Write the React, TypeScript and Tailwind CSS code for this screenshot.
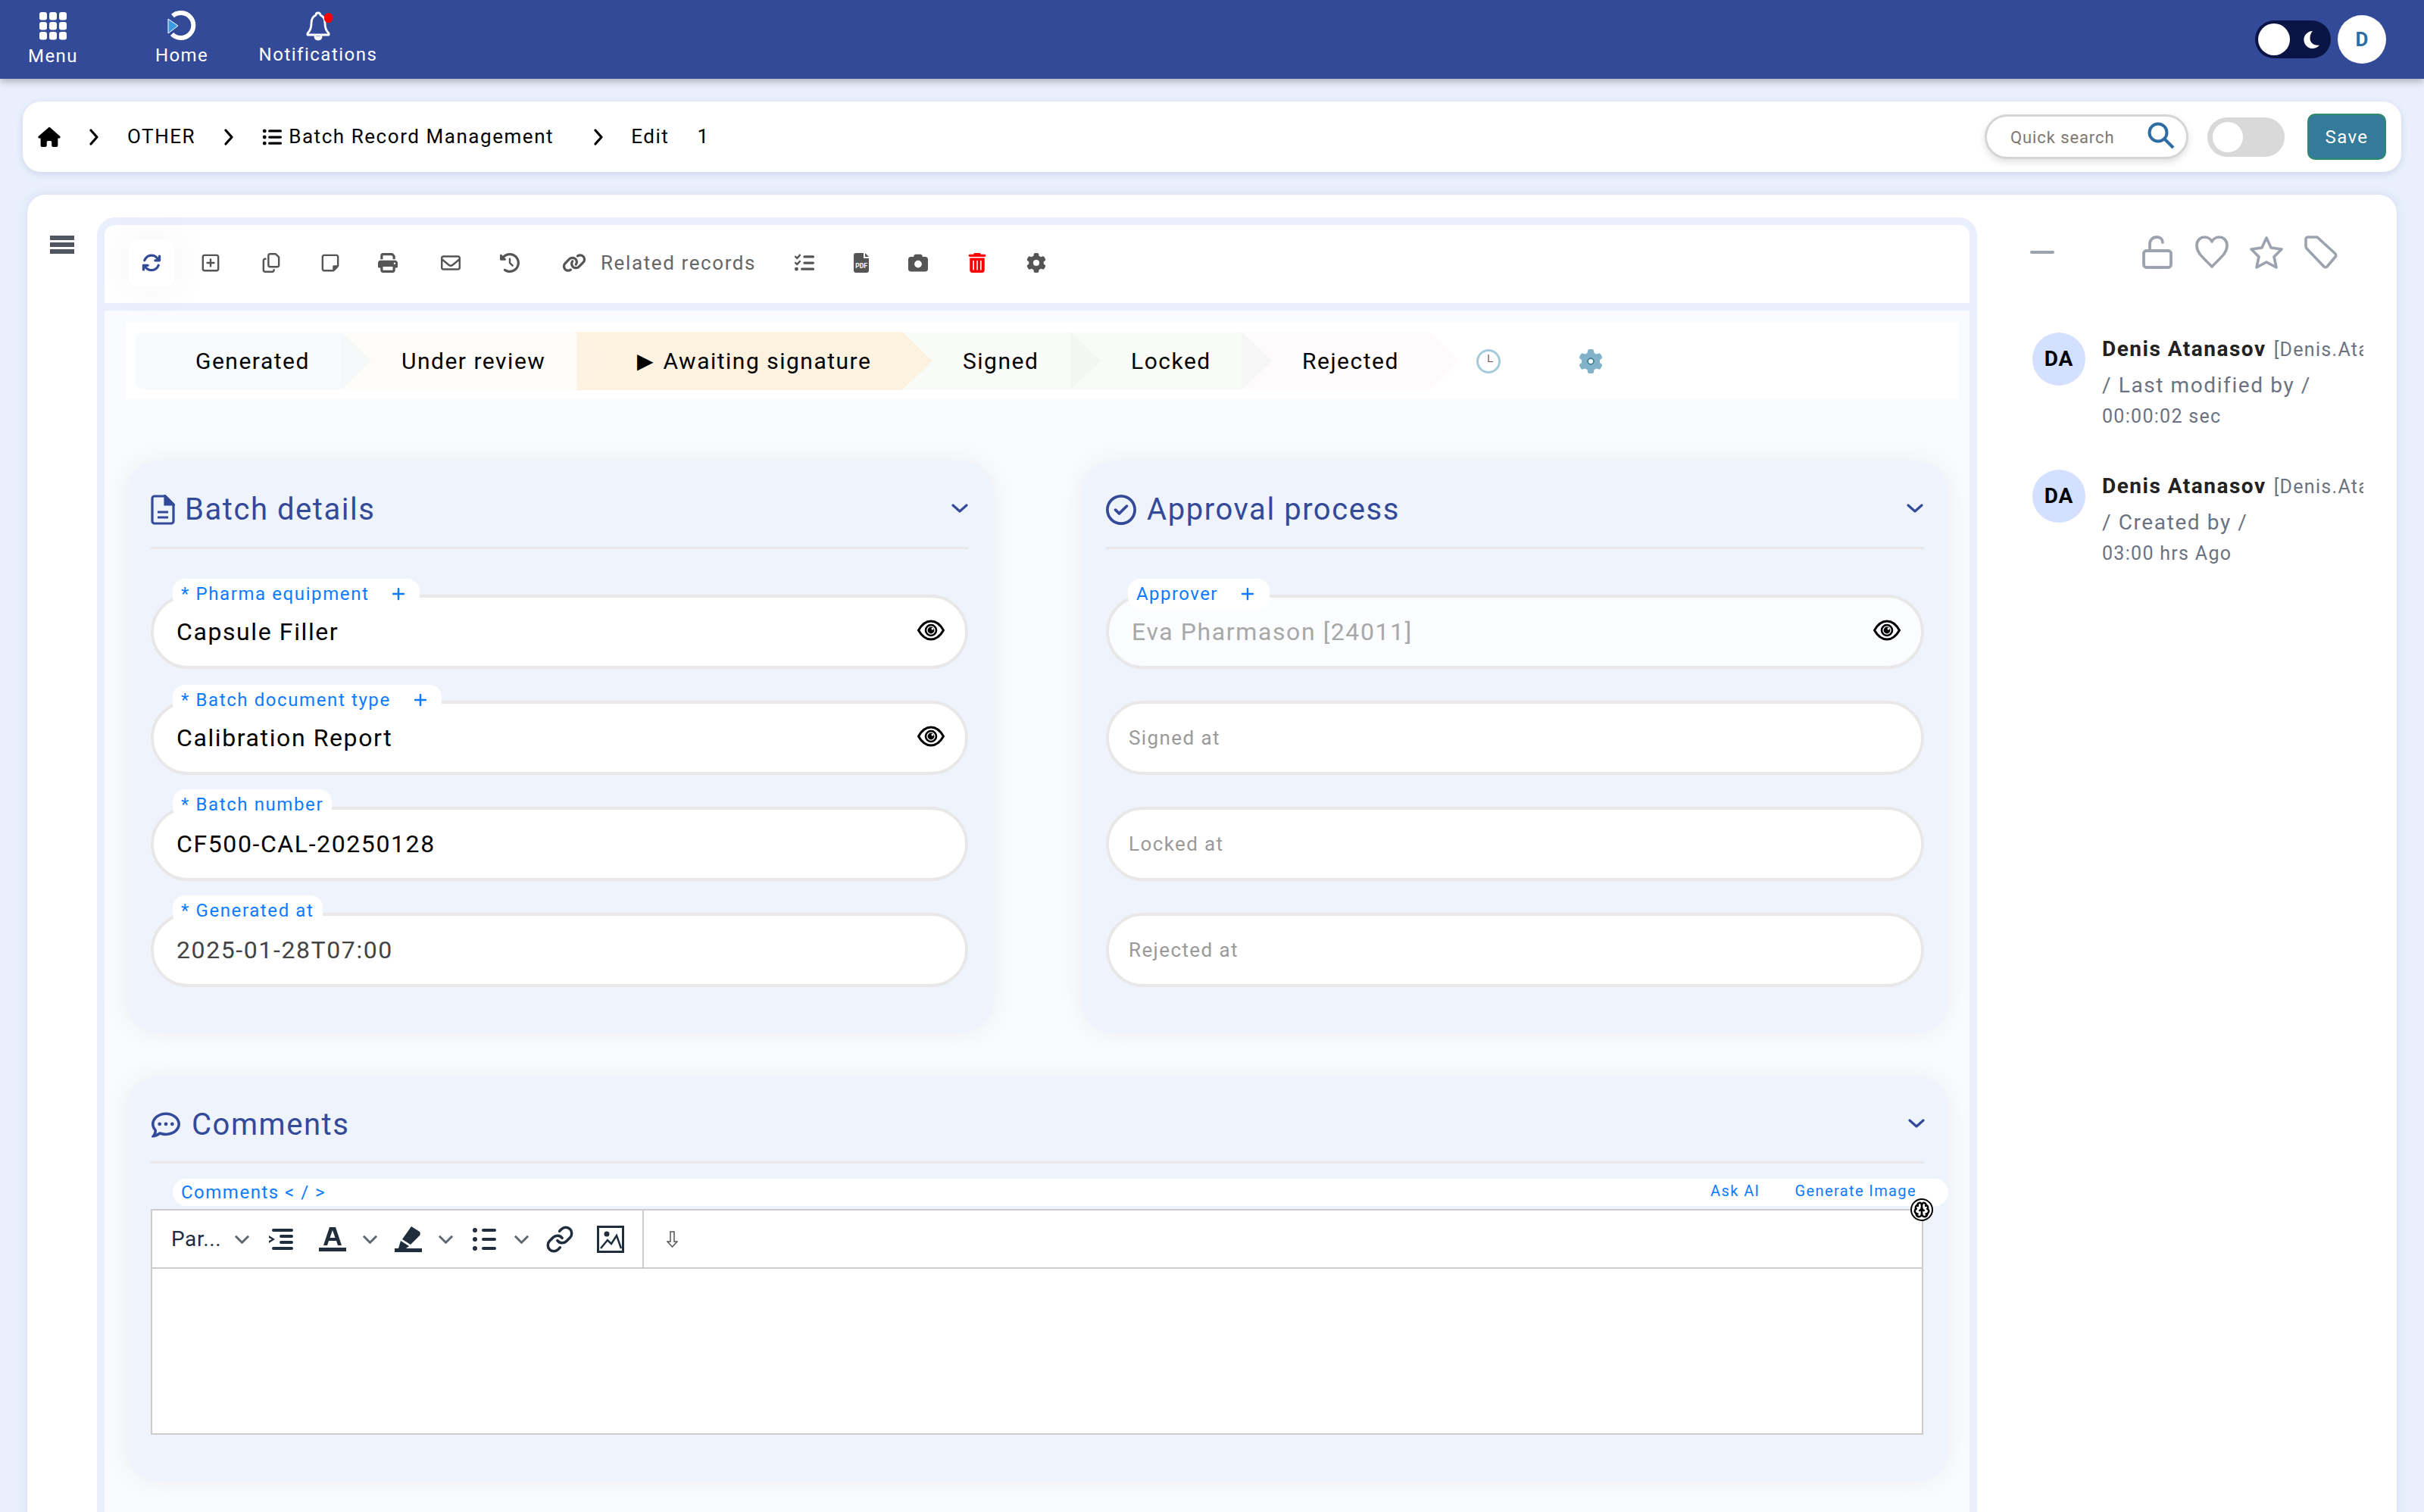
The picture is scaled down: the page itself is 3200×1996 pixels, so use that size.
import React from "react";
import {
  FaArrowsRotate, FaRegSquarePlus, FaRegCopy, FaRegNoteSticky, FaPrint, FaRegEnvelope,
  FaClockRotateLeft, FaLink, FaListCheck, FaCamera, FaTrashCan, FaGear, FaHouse, FaListUl,
  FaPlus, FaRegCircleCheck, FaRegCommentDots,
} from "react-icons/fa6";
import { Brain, Link as LinkIcon } from "lucide-react";

const Chev = ({ className }: { className: string }) => (
  <svg viewBox="0 0 12 22" className={className} fill="none" stroke="currentColor" strokeWidth="3.200" strokeLinecap="round" strokeLinejoin="round">
    <path d="M2 2l8 9-8 9" />
  </svg>
);

const Down = ({ className = "w-[24px] h-[14px] text-[#1f2d3d]" }: { className?: string }) => (
  <svg viewBox="0 0 24 14" className={className} fill="none" stroke="currentColor" strokeWidth="3.400">
    <path d="M2 2l10 10L22 2" />
  </svg>
);

const Eye = () => (
  <svg viewBox="0 0 36 28" className="absolute right-[27px] top-[29px] w-[36px] h-[28px]">
    <path d="M1.500 14C6 6 11.500 2 18 2s12 4 16.500 12C30 22 24.500 26 18 26S6 22 1.500 14Z" fill="none" stroke="#000" strokeWidth="3" strokeLinejoin="round" />
    <circle cx="18" cy="14" r="7" fill="none" stroke="#000" strokeWidth="2.600" />
    <circle cx="18" cy="14" r="4.400" fill="#000" />
    <circle cx="20" cy="12" r="1.500" fill="#fff" />
  </svg>
);

const Field = ({ label, value, plus, eye, chip, valueColor = "text-black" }: { label: string; value: string; plus?: boolean; eye?: boolean; chip: string; valueColor?: string }) => (
  <div className="relative h-[98px] rounded-full border-4 border-[#e8e8e8] bg-white flex items-center pl-[30px]">
    <div className={`absolute left-[25px] h-[40px] rounded-[16px] bg-white flex items-center pl-[11px] text-[24px] leading-none tracking-[1.6px] text-[#0d7bff] whitespace-nowrap ${chip}`}>
      {label}
      {plus && <FaPlus className="ml-[30px] w-[18px] h-[20px]" />}
    </div>
    <span className={`text-[32px] tracking-[1.6px] ${valueColor}`}>{value}</span>
    {eye && <Eye />}
  </div>
);

const EmptyField = ({ text }: { text: string }) => (
  <div className="h-[98px] rounded-full border-4 border-[#e8e8e8] bg-white flex items-center pl-[26px]">
    <span className="text-[26px] tracking-[1.4px] text-[#9a9a9a]">{text}</span>
  </div>
);

const CardChevron = () => <Chev className="w-[14px] h-[22px] rotate-90 text-[#334a99]" />;

const Step = ({ label, bg, arrow, className, first }: { label: React.ReactNode; bg: string; arrow: string; className: string; first?: boolean }) => (
  <div className={`relative h-[77px] flex items-center pl-[80px] text-[30px] tracking-[1.5px] text-black whitespace-nowrap ${bg} ${className} ${first ? "rounded-l-[14px]" : ""}`}>
    {label}
    <div className={`absolute z-10 left-full top-0 h-[77px] w-[40px] [clip-path:polygon(0_0,100%_50%,0_100%)] ${arrow}`} />
  </div>
);

const Activity = ({ action, time, className }: { action: string; time: string; className: string }) => (
  <div className={`flex ${className}`}>
    <div className="w-[70px] h-[70px] rounded-full bg-[#d3e0ff] flex items-center justify-center text-[28px] font-bold tracking-[0.8px] text-black shrink-0">DA</div>
    <div className="ml-[22px] w-[345px] overflow-hidden pt-[2px]">
      <div className="whitespace-nowrap leading-[40px] h-[40px]">
        <span className="text-[28px] font-bold tracking-[1.5px] text-[#222]">Denis Atanasov</span>
        <span className="ml-[10px] text-[25px] tracking-[1.3px] text-[#6b7280]">[Denis.Atanasov]</span>
      </div>
      <div className="mt-[10px] text-[28px] leading-[36px] tracking-[1.6px] text-[#6b7280]">{action}</div>
      <div className="mt-[7px] text-[25px] leading-[32px] tracking-[1.3px] text-[#6b7280]">{time}</div>
    </div>
  </div>
);

export default function App() {
  const icon = "w-[26px] h-[26px] text-[#555]";
  const cell = "w-[60px] h-[63px] flex items-center justify-center shrink-0";
  return (
    <div className="w-[3200px] h-[1996px] overflow-hidden bg-[#e9effc] [font-family:Roboto,sans-serif]">
      {/* Header */}
      <header className="relative z-20 h-[104px] bg-[#334a99] shadow-[0_3px_10px_rgba(0,0,0,0.3)] flex items-start text-white">
        <div className="w-[140px] flex flex-col items-center pt-[16px]">
          <svg viewBox="0 0 36 37" className="w-[36px] h-[37px]" fill="#fff">
            {[0, 13, 26].map((y) => [0, 13, 26].map((x) => <rect key={`${x}-${y}`} x={x} y={y} width="10" height="10.5" rx="3" />))}
          </svg>
          <span className="mt-[7px] text-[24px] leading-[28px] tracking-[1.4px]">Menu</span>
        </div>
        <div className="w-[200px] flex flex-col items-center pt-[14px]">
          <svg viewBox="0 0 40 40" className="w-[40px] h-[40px]">
            <path d="M8 7A16.500 16.500 0 1 1 7 31" fill="none" stroke="#fff" strokeWidth="6" />
            <path d="M2 11l13 9-13 10Z" fill="#3b9ae1" stroke="#fff" strokeWidth="1" />
          </svg>
          <span className="mt-[5px] text-[24px] leading-[28px] tracking-[1.4px]">Home</span>
        </div>
        <div className="w-[160px] flex flex-col items-center pt-[15px]">
          <div className="relative w-[34px] h-[39px]">
            <svg viewBox="0 0 34 39" className="w-[34px] h-[39px]" fill="none" stroke="#fff" strokeWidth="2.800" strokeLinejoin="round" strokeLinecap="round">
              <path d="M17 2c-2 0-3 1.500-3 3C9 7 8 11 8 16c0 6-2 10-5 13v2h28v-2c-3-3-5-7-5-13 0-5-1-9-6-11 0-1.500-1-3-3-3Z" />
              <path d="M13 33c0 3 2 4 4 4s4-1 4-4" fill="#fff" />
            </svg>
            <div className="absolute top-[2px] right-[-2px] w-[11px] h-[13px] rounded-full bg-[#ff0000]" />
          </div>
          <span className="mt-[4px] text-[24px] leading-[28px] tracking-[1.5px]">Notifications</span>
        </div>
        <div className="ml-auto mt-[27px] w-[100px] h-[50px] rounded-full bg-[#0a1545] flex items-center pl-[4px] relative">
          <div className="w-[42px] h-[42px] rounded-full bg-white" />
          <svg viewBox="0 0 24 24" className="ml-[16px] w-[24px] h-[24px]" fill="#fff">
            <path d="M14 1a11.500 11.500 0 1 0 9 18.500c-7 1.500-12.500-3-12.500-9C10.500 6.500 12 3 14 1Z" />
          </svg>
        </div>
        <div className="ml-[9px] mr-[50px] mt-[20px] w-[64px] h-[64px] rounded-full bg-white flex items-center justify-center text-[26px] font-bold text-[#2e6da4]">D</div>
      </header>

      {/* Breadcrumb */}
      <div className="ml-[30px] mt-[30px] w-[3140px] h-[93px] rounded-[24px] bg-white shadow-[0_3px_10px_rgba(60,80,150,0.15)] flex items-center text-[26px] tracking-[1.55px] text-black">
        <FaHouse className="ml-[20px] w-[30px] h-[26px]" />
        <Chev className="ml-[38px] w-[12px] h-[22px]" />
        <span className="ml-[38px]">OTHER</span>
        <Chev className="ml-[38px] w-[12px] h-[22px]" />
        <FaListUl className="ml-[38px] w-[26px] h-[26px]" />
        <span className="ml-[9px]">Batch Record Management</span>
        <Chev className="ml-[53px] w-[12px] h-[22px]" />
        <span className="ml-[37px]">Edit</span>
        <span className="ml-[37px]">1</span>
        <div className="ml-auto relative w-[269px] h-[59px] rounded-full border-[3px] border-[#d5d5d5] bg-white shadow-[0_4px_10px_rgba(0,0,0,0.12)] flex items-center pl-[31px] text-[22px] text-[#80776f] tracking-[0.9px]">
          <span className="mt-[2px]">Quick search</span>
          <svg viewBox="0 0 36 36" className="absolute right-[15px] top-[7px] w-[36px] h-[36px]" fill="none" stroke="#2e6da4">
            <circle cx="14" cy="14" r="11.500" strokeWidth="4" />
            <path d="M22 22l12 12" strokeWidth="4" />
          </svg>
        </div>
        <div className="ml-[25px] w-[102px] h-[52px] rounded-full bg-[#d9d9d9] flex items-center pl-[7px]">
          <div className="w-[40px] h-[40px] rounded-full bg-white" />
        </div>
        <div className="ml-[30px] mr-[20px] w-[104px] h-[61px] rounded-[10px] bg-[#347a99] border-2 border-[#2e8b67] flex items-center justify-center text-[24px] tracking-[1.4px] text-white">Save</div>
      </div>

      {/* Main */}
      <div className="ml-[36px] mt-[30px] w-[3128px] h-[1780px] rounded-t-[24px] bg-white shadow-[0_0_14px_rgba(60,80,150,0.12)] flex items-start">
        <div className="w-[92px] pt-[54px] pl-[30px]">
          <div className="w-[32px] flex flex-col gap-[3px]">
            <div className="h-[6px] bg-[#50565f]" />
            <div className="h-[6px] bg-[#50565f]" />
            <div className="h-[6px] bg-[#50565f]" />
          </div>
        </div>

        {/* Form frame */}
        <div className="mt-[30px] w-[2482px] h-[1780px] rounded-t-[24px] border-[10px] border-[#e9effc] bg-[#fafbff]">
          <div className="h-[103px] pb-[3px] rounded-t-[14px] bg-white flex items-center pl-[32px]">
            <div className={`${cell} bg-white rounded-[12px] shadow-[0_0_60px_rgba(0,0,0,0.06)]`}>
              <FaArrowsRotate className="w-[26px] h-[26px] text-[#334a99]" />
            </div>
            <div className={`${cell} ml-[18px]`}><FaRegSquarePlus className={icon} /></div>
            <div className={`${cell} ml-[20px]`}><FaRegCopy className={icon} /></div>
            <div className={`${cell} ml-[18px]`}><FaRegNoteSticky className={icon} /></div>
            <div className={`${cell} ml-[16px]`}><FaPrint className={icon} /></div>
            <div className={`${cell} ml-[23px]`}><FaRegEnvelope className={icon} /></div>
            <div className={`${cell} ml-[18px]`}><FaClockRotateLeft className={icon} /></div>
            <FaLink className="ml-[39px] w-[32px] h-[26px] text-[#555]" />
            <span className="ml-[19px] w-[206px] text-[26px] tracking-[1.6px] text-[#666] whitespace-nowrap">Related records</span>
            <div className={`${cell} ml-[33px]`}><FaListCheck className={icon} /></div>
            <div className={`${cell} ml-[15px]`}>
              <svg viewBox="0 0 20 26" className="w-[20px] h-[26px]">
                <path d="M3 0h10v7h7v16a3 3 0 0 1-3 3H3a3 3 0 0 1-3-3V3a3 3 0 0 1 3-3Z" fill="#555" />
                <path d="M15 0l5 5h-5Z" fill="#555" />
                <text x="10" y="20" textAnchor="middle" fontSize="8.500" fontWeight="700" fill="#fff" fontFamily="Roboto, sans-serif">PDF</text>
              </svg>
            </div>
            <div className={`${cell} ml-[15px]`}><FaCamera className={icon} /></div>
            <div className={`${cell} ml-[18px]`}><FaTrashCan className="w-[26px] h-[26px] text-[#ff0000]" /></div>
            <div className={`${cell} ml-[18px]`}><FaGear className={icon} /></div>
          </div>
          <div className="h-[10px] bg-[#e9effc]" />

          {/* Status bar */}
          <div className="ml-[28px] mt-[16px] w-[2419px] h-[101px] bg-white flex items-center pl-[12px]">
            <Step first label="Generated" bg="bg-[#f8fbfe]" arrow="bg-[#f6f9f9]" className="w-[272px]" />
            <Step label="Under review" bg="bg-[#fefcf8]" arrow="bg-[#fef2e2]" className="w-[311px]" />
            <Step label={<><span className="text-[28px] leading-none mr-[11px]">▶</span>Awaiting signature</>} bg="bg-[#fdf1df]" arrow="bg-[#fdf1df]" className="w-[430px]" />
            <Step label="Signed" bg="bg-[#f9fbf8]" arrow="bg-[#f3f7f4]" className="w-[222px]" />
            <Step label="Locked" bg="bg-[#f9fbf9]" arrow="bg-[#f7f6f7]" className="w-[226px]" />
            <Step label="Rejected" bg="bg-[#fffbfc]" arrow="bg-[#fffbfc]" className="w-[248px]" />
            <svg viewBox="0 0 32 32" className="ml-[62px] w-[32px] h-[32px]">
              <circle cx="16" cy="16" r="14.500" fill="#fff" stroke="#a4cbdc" strokeWidth="3" />
              <path d="M16 7v9.500h6" fill="none" stroke="#6b4a3a" strokeWidth="1.200" />
            </svg>
            <div className="relative ml-[103px] w-[32px] h-[32px]">
              <FaGear className="w-[32px] h-[32px] text-[#82b2c7]" />
              <div className="absolute left-[11px] top-[11px] w-[10px] h-[10px] rounded-full border-2 border-[#3d7f99]" />
            </div>
          </div>

          {/* Detail cards */}
          <div className="ml-[29px] mt-[82px] flex items-start">
            <section className="w-[1144px] h-[754px] rounded-[40px] bg-[#eff3fc] shadow-[0_0_36px_rgba(0,0,0,0.06)] pl-[32px] pr-[33px]">
              <div className="h-[116px] border-b-[3px] border-[#e8e8e8] flex items-center pt-[14px]">
                <svg viewBox="0 0 32 40" className="w-[32px] h-[40px]" fill="none" stroke="#334a99" strokeWidth="3.200">
                  <path d="M5 2h14l11 11v22a3 3 0 0 1-3 3H5a3 3 0 0 1-3-3V5a3 3 0 0 1 3-3Z" strokeLinejoin="round" />
                  <path d="M19 2l11 11H19Z" fill="#334a99" />
                  <path d="M9 23h14M9 30h14" />
                </svg>
                <h2 className="ml-[13px] text-[40px] font-normal tracking-[1.55px] text-[#334a99]">Batch details</h2>
                <div className="ml-auto mr-[4px] mb-[4px]"><CardChevron /></div>
              </div>
              <div className="mt-[60px] flex flex-col gap-[42px]">
                <Field label="* Pharma equipment" value="Capsule Filler" plus eye chip="top-[-25px] w-[326px]" />
                <Field label="* Batch document type" value="Calibration Report" plus eye chip="top-[-25px] w-[355px]" />
                <Field label="* Batch number" value="CF500-CAL-20250128" chip="top-[-27px] w-[210px]" />
                <Field label="* Generated at" value="2025-01-28T07:00" chip="top-[-27px] w-[198px]" valueColor="text-[#444444]" />
              </div>
            </section>

            <section className="ml-[117px] w-[1144px] h-[754px] rounded-[40px] bg-[#eff3fc] shadow-[0_0_36px_rgba(0,0,0,0.06)] px-[32px]">
              <div className="h-[116px] border-b-[3px] border-[#e8e8e8] flex items-center pt-[14px]">
                <FaRegCircleCheck className="w-[40px] h-[40px] text-[#334a99]" />
                <h2 className="ml-[14px] text-[40px] font-normal tracking-[1.55px] text-[#334a99]">Approval process</h2>
                <div className="ml-auto mr-[5px] mb-[4px]"><CardChevron /></div>
              </div>
              <div className="mt-[60px] flex flex-col gap-[42px]">
                <div className="relative h-[98px] rounded-full border-4 border-[#e8e8e8] bg-[#fbfcff] flex items-center pl-[30px]">
                  <div className="absolute left-[25px] top-[-25px] w-[187px] h-[40px] rounded-[16px] bg-white flex items-center pl-[11px] text-[24px] tracking-[1.45px] text-[#0d7bff]">
                    Approver
                    <FaPlus className="ml-[30px] w-[18px] h-[20px]" />
                  </div>
                  <span className="text-[32px] tracking-[1.6px] text-[#a8a8a8]">Eva Pharmason [24011]</span>
                  <Eye />
                </div>
                <EmptyField text="Signed at" />
                <EmptyField text="Locked at" />
                <EmptyField text="Rejected at" />
              </div>
            </section>
          </div>

          {/* Comments */}
          <section className="ml-[29px] mt-[59px] w-[2405px] h-[533px] rounded-[40px] bg-[#eff3fc] shadow-[0_0_36px_rgba(0,0,0,0.06)] relative">
            <div className="mx-[32px] h-[114px] border-b-[3px] border-[#e8e8e8] flex items-center pt-[14px]">
              <FaRegCommentDots className="w-[40px] h-[38px] text-[#334a99]" />
              <h2 className="ml-[14px] text-[40px] font-normal tracking-[1.55px] text-[#334a99]">Comments</h2>
              <div className="ml-auto mr-[3px] mb-[4px]"><CardChevron /></div>
            </div>
            <div className="ml-[61px] mt-[20px] h-[36px] rounded-[18px] bg-white flex items-center pl-[11px] pr-[42px] text-[#0d7bff]">
              <span className="text-[24px] tracking-[1.5px]">{"Comments < / >"}</span>
              <span className="ml-auto mb-[4px] text-[20px] tracking-[1.4px]">Ask AI</span>
              <span className="ml-[46px] mb-[4px] text-[20px] tracking-[1.4px]">Generate Image</span>
            </div>
            <div className="ml-[32px] mt-[4px] w-[2340px] h-[298px] border-2 border-[#cccccc] bg-white relative">
              <div className="absolute right-[-15px] top-[-16px] w-[30px] h-[30px] rounded-full bg-white border-2 border-black flex items-center justify-center">
                <Brain size={22} strokeWidth={2.800} className="text-black" />
              </div>
              <div className="h-[77px] border-b-2 border-[#cccccc] flex items-center">
                <span className="ml-[25px] w-[63px] text-[28px] text-[#1f2d3d] tracking-[0.6px]">Par...</span>
                <Down className="ml-[20px] w-[21px] h-[12px] text-[#5c6773]" />
                <svg viewBox="0 0 32 28" className="ml-[25px] w-[32px] h-[28px]" fill="#1f2d3d">
                  <rect x="4" y="0" width="28" height="4" rx="2" /><rect x="14" y="8" width="18" height="4" rx="2" /><rect x="14" y="16" width="18" height="4" rx="2" /><rect x="4" y="24" width="28" height="4" rx="2" />
                  <path d="M0 9l8 5-8 5v-3l4-2-4-2Z" />
                </svg>
                <svg viewBox="0 0 36 32" className="ml-[34px] w-[36px] h-[32px]" fill="#1f2d3d">
                  <path d="M14 0h8l8 24h-5l-2-6H13l-2 6H6ZM14.500 14h7L18 4Z" /><rect x="0" y="27" width="36" height="5" />
                </svg>
                <Down className="ml-[21px] w-[21px] h-[12px] text-[#5c6773]" />
                <svg viewBox="0 0 36 34" className="ml-[22px] w-[36px] h-[34px]" fill="#1f2d3d">
                  <path d="M22 0l11 7c1 2 1 3 0 5L21 24 10 17Z" /><path d="M8 19l11 7-4 3H5Z" /><rect x="0" y="29" width="36" height="5" />
                </svg>
                <Down className="ml-[21px] w-[21px] h-[12px] text-[#5c6773]" />
                <svg viewBox="0 0 31 30" className="ml-[25px] w-[31px] h-[30px]" fill="#1f2d3d">
                  <circle cx="3" cy="3" r="3" /><circle cx="3" cy="15" r="3" /><circle cx="3" cy="27" r="3" />
                  <rect x="12" y="1" width="19" height="4" rx="2" /><rect x="12" y="13" width="19" height="4" rx="2" /><rect x="12" y="25" width="19" height="4" rx="2" />
                </svg>
                <Down className="ml-[23px] w-[21px] h-[12px] text-[#5c6773]" />
                <LinkIcon size={38} strokeWidth={2.200} className="ml-[21px] text-[#1f2d3d]" />
                <svg viewBox="0 0 36 36" className="ml-[30px] w-[36px] h-[36px]">
                  <rect x="1.500" y="1.500" width="33" height="33" fill="none" stroke="#1f2d3d" strokeWidth="3" />
                  <circle cx="13" cy="11" r="3.500" fill="#1f2d3d" />
                  <path d="M5 30l9-11 5 5 7-11 6 17" fill="none" stroke="#1f2d3d" strokeWidth="2.500" />
                </svg>
                <div className="ml-[24px] w-[2px] h-[75px] bg-[#cccccc]" />
                <svg viewBox="0 0 15 22" className="ml-[30px] w-[15px] h-[22px]" fill="none" stroke="#555" strokeWidth="1.500">
                  <path d="M5 1h5v13h4l-6.500 7L1 14h4Z" />
                </svg>
              </div>
            </div>
          </section>
        </div>

        {/* Right panel */}
        <aside className="w-[554px] pt-[54px]">
          <div className="flex items-center h-[43px] text-[#9ca3af]">
            <div className="ml-[70px] w-[32px] h-[4px] rounded bg-[#9ca3af] mt-[1px]" />
            <svg viewBox="0 0 40 44" className="ml-[116px] w-[40px] h-[44px]" fill="none" stroke="currentColor" strokeWidth="3.800" strokeLinejoin="round" strokeLinecap="round">
              <path d="M10 20V11c0-5 4-9 9-9s8 3 8 7" />
              <rect x="2" y="20" width="36" height="22" rx="3.500" />
            </svg>
            <svg viewBox="0 0 44 44" className="ml-[30px] w-[44px] h-[44px]" fill="none" stroke="currentColor" strokeWidth="3.600" strokeLinejoin="round">
              <path d="M22 41C12 30 2 24 2 13 2 6 7 2 12.500 2c4 0 8 2.500 9.500 6 1.500-3.500 5.500-6 9.500-6C37 2 42 6 42 13c0 11-10 17-20 28Z" />
            </svg>
            <svg viewBox="0 0 44 44" className="ml-[28px] w-[44px] h-[44px]" fill="none" stroke="currentColor" strokeWidth="3.600" strokeLinejoin="round">
              <path d="M22 3l6 13 14 2-10 10 3 14-13-7-13 7 3-14L2 18l14-2Z" />
            </svg>
            <svg viewBox="0 0 44 44" className="ml-[28px] w-[44px] h-[44px]" fill="none" stroke="currentColor" strokeWidth="3.600" strokeLinejoin="round">
              <path d="M2 5c0-2 1-3 3-3h12l24 22c1 2 1 3 0 4L30 41c-1 1-3 1-4 0L4 18c-1-1-2-2-2-4Z" />
            </svg>
          </div>
          <Activity action="/ Last modified by /" time="00:00:02 sec" className="ml-[73px] mt-[85px]" />
          <Activity action="/ Created by /" time="03:00 hrs Ago" className="ml-[73px] mt-[54px]" />
        </aside>
      </div>
    </div>
  );
}
